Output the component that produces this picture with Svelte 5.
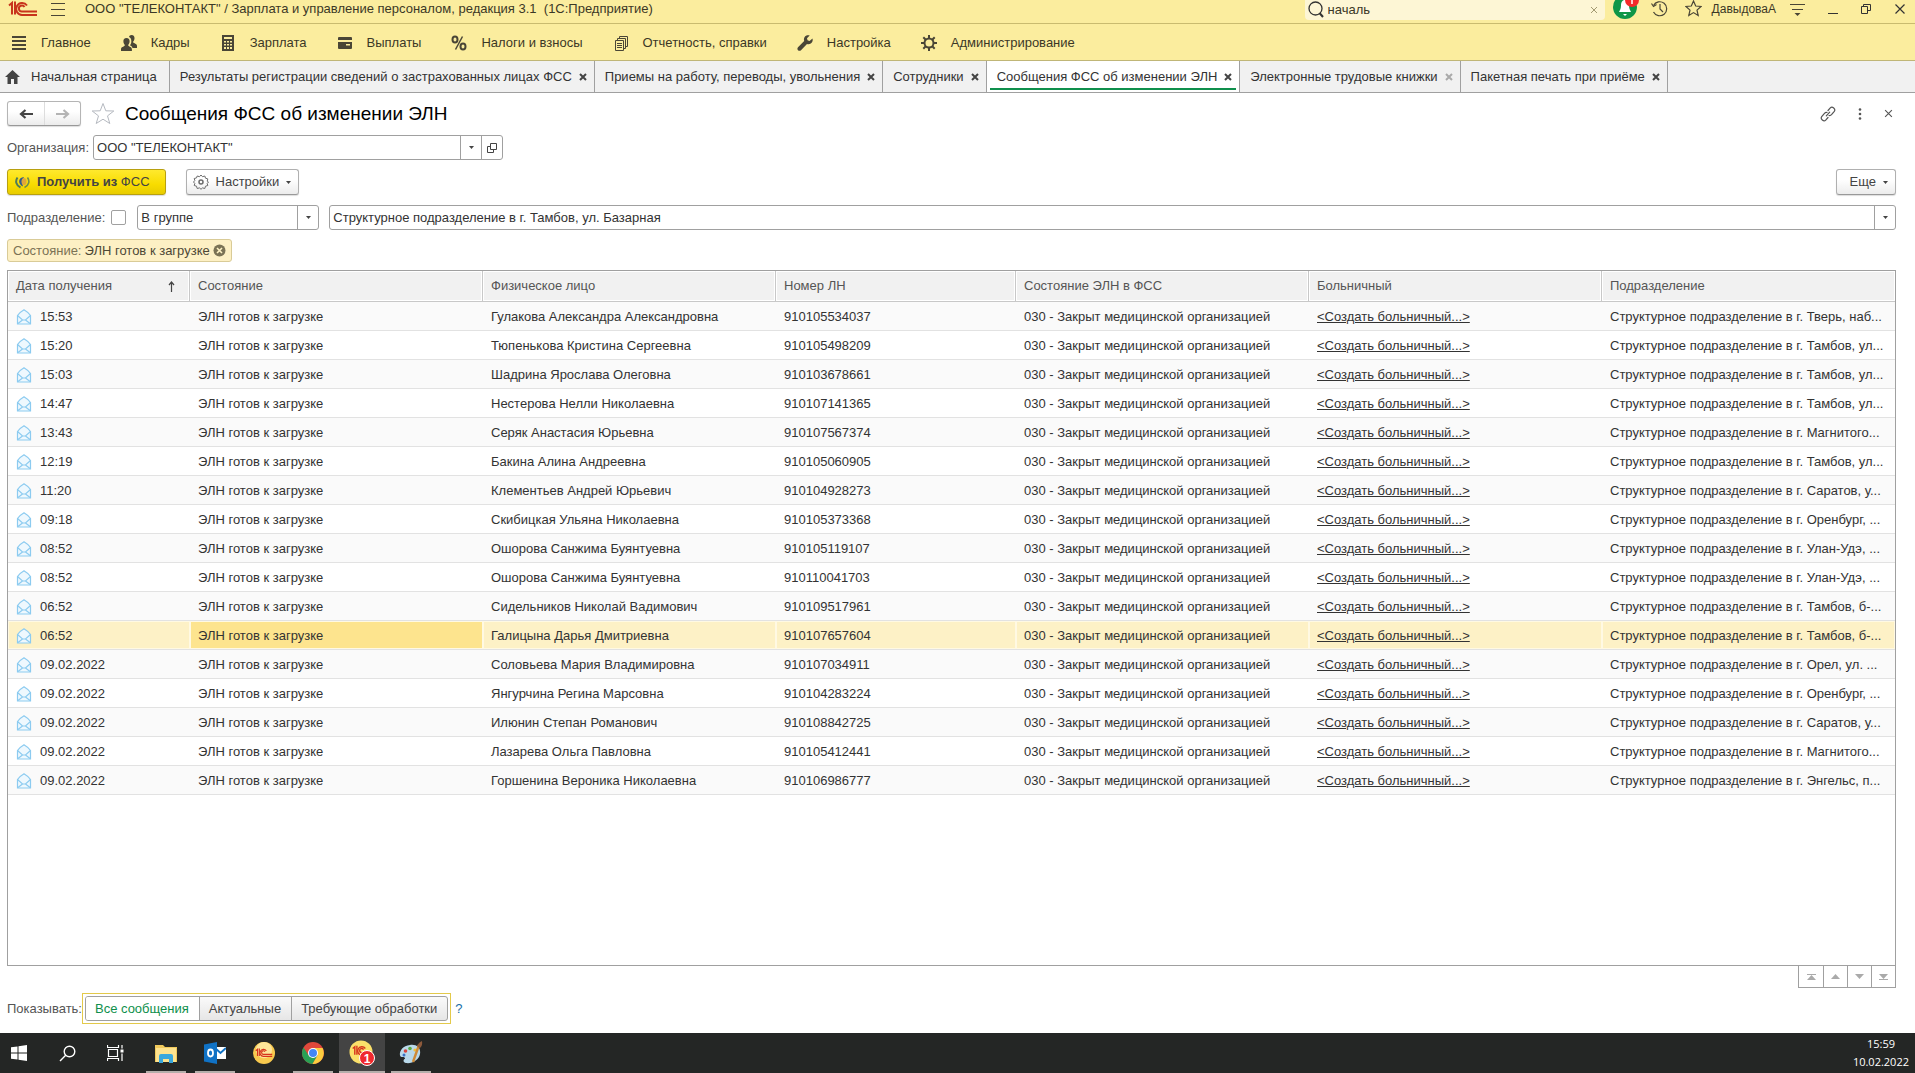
<script lang="ts">
  type Tab = { title: string; active?: boolean; dim?: boolean }
  type Row = { date: string; person: string; number: string; unit: string; current?: boolean }

  const sections = [
    { icon: 'main', title: 'Главное' },
    { icon: 'people', title: 'Кадры' },
    { icon: 'calc', title: 'Зарплата' },
    { icon: 'card', title: 'Выплаты' },
    { icon: 'percent', title: 'Налоги и взносы' },
    { icon: 'docs', title: 'Отчетность, справки' },
    { icon: 'wrench', title: 'Настройка' },
    { icon: 'gear', title: 'Администрирование' },
  ]

  const tabs: Tab[] = [
    { title: 'Результаты регистрации сведений о застрахованных лицах ФСС' },
    { title: 'Приемы на работу, переводы, увольнения' },
    { title: 'Сотрудники' },
    { title: 'Сообщения ФСС об изменении ЭЛН', active: true },
    { title: 'Электронные трудовые книжки', dim: true },
    { title: 'Пакетная печать при приёме' },
  ]

  const unit = 'Структурное подразделение в г. '

  const rows: Row[] = [
    { date: '15:53', person: 'Гулакова Александра Александровна', number: '910105534037', unit: 'Тверь, наб...' },
    { date: '15:20', person: 'Тюпенькова Кристина Сергеевна', number: '910105498209', unit: 'Тамбов, ул...' },
    { date: '15:03', person: 'Шадрина Ярослава Олеговна', number: '910103678661', unit: 'Тамбов, ул...' },
    { date: '14:47', person: 'Нестерова Нелли Николаевна', number: '910107141365', unit: 'Тамбов, ул...' },
    { date: '13:43', person: 'Серяк Анастасия Юрьевна', number: '910107567374', unit: 'Магнитого...' },
    { date: '12:19', person: 'Бакина Алина Андреевна', number: '910105060905', unit: 'Тамбов, ул...' },
    { date: '11:20', person: 'Клементьев Андрей Юрьевич', number: '910104928273', unit: 'Саратов, у...' },
    { date: '09:18', person: 'Скибицкая Ульяна Николаевна', number: '910105373368', unit: 'Оренбург, ...' },
    { date: '08:52', person: 'Ошорова Санжима Буянтуевна', number: '910105119107', unit: 'Улан-Удэ, ...' },
    { date: '08:52', person: 'Ошорова Санжима Буянтуевна', number: '910110041703', unit: 'Улан-Удэ, ...' },
    { date: '06:52', person: 'Сидельников Николай Вадимович', number: '910109517961', unit: 'Тамбов, б-...' },
    { date: '06:52', person: 'Галицына Дарья Дмитриевна', number: '910107657604', unit: 'Тамбов, б-...', current: true },
    { date: '09.02.2022', person: 'Соловьева Мария Владимировна', number: '910107034911', unit: 'Орел, ул. ...' },
    { date: '09.02.2022', person: 'Янгурчина Регина Марсовна', number: '910104283224', unit: 'Оренбург, ...' },
    { date: '09.02.2022', person: 'Илюнин Степан Романович', number: '910108842725', unit: 'Саратов, у...' },
    { date: '09.02.2022', person: 'Лазарева Ольга Павловна', number: '910105412441', unit: 'Магнитого...' },
    { date: '09.02.2022', person: 'Горшенина Вероника Николаевна', number: '910106986777', unit: 'Энгельс, п...' },
  ]

  const filters = ['Все сообщения', 'Актуальные', 'Требующие обработки']

  let search = $state('началь')
  let organization = $state('ООО "ТЕЛЕКОНТАКТ"')
  let unitFilter = $state('Структурное подразделение в г. Тамбов, ул. Базарная')
  let useUnit = $state(false)
  let shown = $state('Все сообщения')
</script>

{#snippet arrow()}
  <svg class="arrow" width="5" height="3" viewBox="0 0 5 3" aria-hidden="true"><path d="M0 0h5L2.500 3z" fill="#444" /></svg>
{/snippet}

{#snippet cross(size: number, color: string, weight: number)}
  <svg width={size} height={size} viewBox="0 0 8 8" aria-hidden="true">
    <path d="M1 1l6 6M7 1L1 7" stroke={color} stroke-width={weight} fill="none" />
  </svg>
{/snippet}

{#snippet sectionIcon(name: string)}
  <svg width="18" height="18" viewBox="0 0 18 18" fill="#4a4636" aria-hidden="true">
    {#if name === 'main'}
      <path d="M2 2h14v2H2zM2 6h14v2H2zM2 10h14v2H2zM2 14h14v2H2z" />
    {:else if name === 'people'}
      <path d="M11.500 1c2.200 0 3.200 1.600 3 3.600-.1 1.500-.8 2.500-1.300 3v1c.6.8 3.800 1.100 3.800 3.300V14h-4.500c-.3-1.500-1.500-2.200-2.500-2.700 1-1.200 1.500-3 1.300-4.600C11.200 4.700 10.300 3.600 9 3c.2-1.200 1.300-2 2.500-2z" />
      <path d="M6.500 4c2.200 0 3.200 1.500 3.100 3.500-.1 1.700-.8 2.700-1.300 3.200v1c.7.900 3.600 1.200 3.600 3.500V17H1v-1.800c0-2.300 3-2.600 3.700-3.500v-1c-.5-.5-1.200-1.500-1.300-3.200C3.300 5.500 4.300 4 6.500 4z" />
    {:else if name === 'calc'}
      <path fill-rule="evenodd" d="M3 1h12v16H3zM5 3v2h8V3zM5 7v1.500h2V7zM8 7v1.500h2V7zM11 7v1.500h2V7zM5 10v1.500h2V10zM8 10v1.500h2V10zM11 10v1.500h2V10zM5 13v2h2v-2zM8 13v2h2v-2zM11 13v2h2v-2z" />
    {:else if name === 'card'}
      <path fill-rule="evenodd" d="M3 3h12a1 1 0 0 1 1 1v2H2V4a1 1 0 0 1 1-1zM2 8h14v6a1 1 0 0 1-1 1H3a1 1 0 0 1-1-1zM10 10v1.500h4V10z" />
    {:else if name === 'percent'}
      <g fill="none" stroke="#4a4636" stroke-width="2">
        <ellipse cx="5" cy="5.500" rx="2.500" ry="3" /><ellipse cx="13" cy="12.500" rx="2.500" ry="3" /><path d="M12.500 2.500l-7 13" stroke-width="1.500" />
      </g>
    {:else if name === 'docs'}
      <g fill="none" stroke="#4a4636" stroke-width="1">
        <path d="M3.500 6.500h8v10h-8zM5.500 6V4.500h8v10H12M7.500 4V2.500h8v10H14M5 9.500h5M5 11.500h5M5 13.500h5" />
      </g>
    {:else if name === 'wrench'}
      <path d="M16.500 4.500l-3 2.500-2-.7-.5-2 2.700-2.700c-2-.6-4.200 0-5.200 1.700-.7 1.300-.7 2.500-.3 3.700L2 13.200c-.8.900-.8 2.200 0 3s2.200.8 3 0L11 10c1.200.4 2.600.3 3.800-.5 1.700-1.100 2.300-3.200 1.700-5z" />
    {:else}
      <circle cx="9" cy="9" r="4.500" fill="none" stroke="#4a4636" stroke-width="2" />
      <path d="M8 1h2v3H8zM8 14h2v3H8zM1 8h3v2H1zM14 8h3v2h-3zM2.600 4l1.400-1.400 2.200 2.200-1.400 1.400zM11.800 13.200l1.400-1.400 2.200 2.200-1.400 1.400zM2.600 14l2.200-2.200 1.400 1.400L4 15.400zM11.800 4.800L14 2.600 15.400 4l-2.200 2.200z" />
    {/if}
  </svg>
{/snippet}

{#snippet logo(color: string)}
  <g fill="none" stroke={color} stroke-width="2">
    <path d="M1 5l3-2.500V14" /><path d="M7 1v13" />
    <path d="M19 5a6 6 0 1 0-5 9.500h15" /><path d="M16.500 6.500a3 3 0 1 0-2.500 4.500h15" />
  </g>
{/snippet}

<div class="window">
  <header class="titlebar">
    <svg class="logo" width="30" height="17" viewBox="0 0 30 16" role="img" aria-label="1С">{@render logo('#c8341c')}</svg>
    <button class="burger" aria-label="Меню">
      <svg width="14" height="14" viewBox="0 0 14 14"><path d="M0 1.500h14M0 7.500h14M0 13.500h14" stroke="#4a4636" /></svg>
    </button>
    <span>ООО "ТЕЛЕКОНТАКТ" / Зарплата и управление персоналом, редакция 3.1&nbsp; (1С:Предприятие)</span>
    <label class="search">
      <svg width="16" height="18" viewBox="0 0 16 18" fill="none" stroke="#333"><circle cx="7.500" cy="7.500" r="6.500" stroke-width="1.300" /><path d="M11.500 12l3.500 4" stroke-width="2" /></svg>
      <input type="text" aria-label="Поиск" bind:value={search} />
      <button aria-label="Очистить">{@render cross(8, '#a39a72', 1)}</button>
    </label>
    <button class="bell" aria-label="Уведомления">
      <svg width="27" height="20" viewBox="0 0 27 20">
        <circle cx="12" cy="8" r="12" fill="#0f9647" />
        <path d="M12 1c-3 0-4 2.500-4 5.500 0 3-1 4.500-2 6.500h12c-1-2-2-3.500-2-6.500C16 3.500 15 1 12 1z" fill="#fff" /><path d="M10 15h4l-2 2z" fill="#fff" />
        <circle cx="19" cy="1" r="7" fill="#f52a2a" /><path d="M19 0v5" stroke="#fff" stroke-width="1.500" />
      </svg>
    </button>
    <button aria-label="История">
      <svg width="17" height="17" viewBox="0 0 17 17" fill="none" stroke="#4a4636" stroke-width="1.200"><path d="M2.500 5.500a7 7 0 1 1 0 6.500" /><path d="M0.500 3.500l2 3 3-2M9 4v5l3 3" /></svg>
    </button>
    <button aria-label="Избранное">
      <svg width="17" height="17" viewBox="0 0 17 17" fill="none" stroke="#4a4636" stroke-width="1.200"><path d="M8.500 1l2.200 5 5.300.5-4 3.600 1.200 5.400-4.700-2.900-4.700 2.900L5 10.100 1 6.500 6.300 6z" /></svg>
    </button>
    <a class="user" href="#user">ДавыдоваА</a>
    <button class="win" aria-label="Настройки окна">
      <svg width="15" height="16" viewBox="0 0 15 16"><path d="M0 3.500h15M2 8.500h11" stroke="#4a4636" /><path d="M4.500 12h6l-3 3z" fill="#4a4636" /></svg>
    </button>
    <button class="win" aria-label="Свернуть"><svg width="10" height="10" viewBox="0 0 10 10"><path d="M0 9.500h10" stroke="#333" /></svg></button>
    <button class="win" aria-label="Восстановить"><svg width="10" height="10" viewBox="0 0 10 10" fill="none" stroke="#333"><path d="M0.500 2.500h6v7h-6zM2.500 2V0.500h7v6H7" /></svg></button>
    <button class="win" aria-label="Закрыть">{@render cross(12, '#333', 0.8)}</button>
  </header>

  <nav class="sections">
    {#each sections as section}
      <a href="#{section.icon}">{@render sectionIcon(section.icon)}{section.title}</a>
    {/each}
  </nav>

  <nav class="tabs">
    <a class="tab home" href="#home">
      <svg width="15" height="14" viewBox="0 0 15 14"><path d="M7.500 0L15 7h-2.500v7H9V9H6v5H2.500V7H0z" fill="#444" /></svg>
      Начальная страница
    </a>
    {#each tabs as tab}
      <div class="tab" class:active={tab.active}>
        <a href="#tab">{tab.title}</a>
        <button aria-label="Закрыть вкладку">{@render cross(8, tab.dim ? '#aaa' : '#444', 2)}</button>
      </div>
    {/each}
  </nav>

  <main>
    <div class="heading">
      <div class="history">
        <button aria-label="Назад"><svg width="14" height="10" viewBox="0 0 14 10"><path d="M14 5H3M6.500 1L2 5l4.500 4" stroke="#444" stroke-width="2.200" fill="none" /></svg></button>
        <button aria-label="Вперед"><svg width="14" height="10" viewBox="0 0 14 10"><path d="M0 5h11M7.500 1L12 5l-4.500 4" stroke="#b4b4b4" stroke-width="2.200" fill="none" /></svg></button>
      </div>
      <button aria-label="В избранное">
        <svg width="24" height="23" viewBox="0 0 24 23" fill="none" stroke="#b5b9c0"><path d="M12 1.500l2.800 7.300 8 .2-6.300 4.900 2.300 7.600L12 17.200l-6.800 4.300 2.300-7.600L1.200 9l8-.2z" /></svg>
      </button>
      <h1>Сообщения ФСС об изменении ЭЛН</h1>
      <div class="form-tools">
        <button aria-label="Ссылка">
          <svg width="16" height="16" viewBox="0 0 16 16" fill="none" stroke="#555" stroke-width="1.200" stroke-linecap="round">
            <path d="M8 4.500l2.300-2.700c2-2 5.700 1.200 4 3.500L11.500 8.700c-.7.8-1.600 1-2.500.8" /><path d="M8 11.500l-2.300 2.700c-2 2-5.700-1.200-4-3.500l2.800-3.400c.7-.8 1.600-1 2.500-.8" /><path d="M6.300 9.800l3.400-3.700" />
          </svg>
        </button>
        <button aria-label="Еще"><svg width="4" height="12" viewBox="0 0 4 12" fill="#555"><circle cx="2" cy="1.500" r="1.300" /><circle cx="2" cy="6" r="1.300" /><circle cx="2" cy="10.500" r="1.300" /></svg></button>
        <button aria-label="Закрыть">{@render cross(9, '#555', 1)}</button>
      </div>
    </div>

    <div class="line">
      <label for="organization">Организация:</label>
      <div class="field organization">
        <input id="organization" type="text" bind:value={organization} />
        <button aria-label="Выбрать">{@render arrow()}</button>
        <button aria-label="Открыть"><svg width="10" height="10" viewBox="0 0 10 10" fill="none" stroke="#444"><path d="M3.500 0.500h6v6h-6zM3 3.500H0.500v6h6V7" /></svg></button>
      </div>
    </div>

    <div class="line commands">
      <button class="command primary">
        <svg width="15" height="13" viewBox="0 0 15 13" fill="none">
          <path d="M2.500 1.500C0 5 1 9.500 5.500 11.500" stroke="#4f7a5a" stroke-width="2" /><path d="M12.500 1.500c2.500 3.500 1.500 8-3 10" stroke="#6f8d4d" stroke-width="1.600" />
          <path d="M9 1C3 1.500 2.500 8 8 10.500c-1-3-1-6.500 1-9.500z" fill="#2f5d8c" /><ellipse cx="9" cy="5.500" rx="2.500" ry="3.500" fill="#e0a63a" />
        </svg>
        <span>Получить из <span class="thin">ФСС</span></span>
      </button>
      <button class="command">
        <svg width="16" height="16" viewBox="0 0 16 16" fill="none" stroke="#6b6b6b"><path d="M8 1l1.500 1.700L11.800 2l.7 2.200 2.300.7-.6 2.300L15.500 8l-1.300 1.500.6 2-2.300.7-.7 2.300-2.300-.6L8 15.300l-1.500-1.400-2.300.6-.7-2.300-2.300-.7.6-2L.5 8l1.300-1.500-.6-2 2.300-.6L4.200 2l2.300.7z" /><circle cx="8" cy="8" r="2" stroke-width="1.500" /></svg>
        Настройки
        {@render arrow()}
      </button>
      <button class="command more">Еще {@render arrow()}</button>
    </div>

    <div class="line">
      <label for="use-unit">Подразделение:</label>
      <input id="use-unit" class="check" type="checkbox" bind:checked={useUnit} />
      <div class="field comparison">
        <select aria-label="Вид сравнения"><option>В группе</option></select>
        <span class="drop">{@render arrow()}</span>
      </div>
      <div class="field unit">
        <input type="text" aria-label="Подразделение" bind:value={unitFilter} />
        <button aria-label="Выбрать">{@render arrow()}</button>
      </div>
    </div>

    <div class="chip">
      <span>Состояние:</span> ЭЛН готов к загрузке
      <button aria-label="Убрать отбор">
        <svg width="13" height="13" viewBox="0 0 13 13"><circle cx="6.500" cy="6.500" r="6" fill="#7b7355" /><path d="M4 4l5 5M9 4L4 9" stroke="#fff3c4" stroke-width="1.600" /></svg>
      </button>
    </div>

    <div class="list">
      <table>
        <colgroup>
          <col class="w-date" /><col class="w-text" /><col class="w-text" /><col class="w-number" /><col class="w-text" /><col class="w-text" /><col class="w-text" />
        </colgroup>
        <thead>
          <tr>
            <th>
              <div class="sorted">
                Дата получения
                <svg width="7" height="11" viewBox="0 0 7 11" aria-hidden="true"><path d="M3.500 11V1.500M1 4l2.500-3L6 4" fill="none" stroke="#444" stroke-width="1.200" /></svg>
              </div>
            </th>
            <th>Состояние</th>
            <th>Физическое лицо</th>
            <th>Номер ЛН</th>
            <th>Состояние ЭЛН в ФСС</th>
            <th>Больничный</th>
            <th>Подразделение</th>
          </tr>
        </thead>
        <tbody>
          {#each rows as row}
            <tr class:current={row.current}>
              <td>
                <div class="date">
                  <svg width="16" height="16" viewBox="0 0 16 16" fill="none" stroke="#8ccbf0" stroke-width="1.200">
                    <path d="M1.500 6.500C3 3.500 6 2 8 0.800c2 1.200 5 2.700 6.500 5.700v8.500h-13z" fill="#eef8fe" /><path d="M1.500 6.500L6.500 11h3l5-4.500M2 14.500L6.500 11M14 14.500L9.500 11" />
                  </svg>
                  {row.date}
                </div>
              </td>
              <td class="state">ЭЛН готов к загрузке</td>
              <td>{row.person}</td>
              <td>{row.number}</td>
              <td>030 - Закрыт медицинской организацией</td>
              <td><a href="#create">&lt;Создать больничный...&gt;</a></td>
              <td>{unit}{row.unit}</td>
            </tr>
          {/each}
        </tbody>
      </table>
    </div>

    <div class="scroller">
      <button aria-label="В начало"><svg width="9" height="6" viewBox="0 0 9 6" fill="#aaa"><path d="M0 0h9v1H0zM4.500 1L9 6H0z" /></svg></button>
      <button aria-label="Вверх"><svg width="9" height="5" viewBox="0 0 9 5" fill="#aaa"><path d="M4.500 0L9 5H0z" /></svg></button>
      <button aria-label="Вниз"><svg width="9" height="5" viewBox="0 0 9 5" fill="#aaa"><path d="M0 0h9L4.500 5z" /></svg></button>
      <button aria-label="В конец"><svg width="9" height="6" viewBox="0 0 9 6" fill="#aaa"><path d="M0 0h9L4.500 5zM0 5h9v1H0z" /></svg></button>
    </div>

    <div class="line show">
      <span>Показывать:</span>
      <div class="focus">
        <div class="switch">
          {#each filters as filter}
            <button class:on={shown === filter} onclick={() => (shown = filter)}>{filter}</button>
          {/each}
        </div>
      </div>
      <a class="help" href="#help">?</a>
    </div>
  </main>

  <footer class="taskbar">
    <div class="system">
      <button aria-label="Пуск"><svg width="16" height="16" viewBox="0 0 16 16" fill="#fff"><path d="M0 2.300l6.500-.9v6.100H0zM7.500 1.200L16 0v7.500H7.500zM0 8.500h6.500v6.100L0 13.700zM7.500 8.500H16V16l-8.500-1.200z" /></svg></button>
      <button aria-label="Поиск"><svg width="17" height="17" viewBox="0 0 17 17" fill="none" stroke="#fff" stroke-width="1.400"><circle cx="10.500" cy="6.500" r="5.300" /><path d="M6.700 10.300L1 16" /></svg></button>
      <button aria-label="Представление задач"><svg width="17" height="16" viewBox="0 0 17 16" fill="none" stroke="#fff" stroke-width="1.200"><path d="M1.500 4.500h9v7h-9zM0.500 0v2.500h11V0M0.500 16v-2.500h11V16M15 0v3.500M15 8.500V16" /><path d="M13.500 4.500h3v3h-3z" fill="#fff" stroke="none" /></svg></button>
    </div>
    <button class="open" aria-label="Проводник">
      <svg width="22" height="19" viewBox="0 0 22 19"><path d="M0 1h8l2 2h12v15H0z" fill="#f0c95c" /><path d="M1 4h20v14H1z" fill="#fde28e" /><path d="M4 19v-7a2 2 0 0 1 2-2h10a2 2 0 0 1 2 2v7h-4v-4H8v4z" fill="#3aa7dc" /></svg>
    </button>
    <button class="open" aria-label="Outlook">
      <svg width="22" height="22" viewBox="0 0 22 22"><path d="M11 5h11v12H11z" fill="#fff" /><path d="M11 6l5.500 5L22 6" stroke="#1072c5" stroke-width="2" fill="none" /><path d="M0 2.500L13 0v22L0 19.500z" fill="#1072c5" /><ellipse cx="6.500" cy="11" rx="2.500" ry="3.500" fill="none" stroke="#fff" stroke-width="1.800" /></svg>
    </button>
    <button aria-label="1С">
      <svg width="22" height="22" viewBox="0 0 30 30"><circle cx="15" cy="15" r="15" fill="#f8c94e" /><circle cx="15" cy="11" r="11" fill="#fde59a" /><g transform="translate(3 8) scale(0.8)">{@render logo('#d6331c')}</g></svg>
    </button>
    <button class="open" aria-label="Chrome">
      <svg width="22" height="22" viewBox="0 0 22 22"><circle cx="11" cy="11" r="11" fill="#e0483b" /><path d="M1.500 5.500A11 11 0 0 0 10.500 22L15.500 13.500 11 11l-4.300 2.500z" fill="#29a055" /><path d="M20.600 6H11l4.500 7.500L10.500 22A11 11 0 0 0 20.600 6z" fill="#fccd3f" /><circle cx="11" cy="11" r="5" fill="#fff" /><circle cx="11" cy="11" r="4" fill="#4286f4" /></svg>
    </button>
    <button class="open focused" aria-label="1С:Предприятие">
      <svg width="26" height="26" viewBox="0 0 26 26"><circle cx="12" cy="12" r="11.500" fill="#fbe06a" /><g transform="translate(3 5) scale(0.700)">{@render logo('#d6331c')}</g><circle cx="18" cy="18" r="7.500" fill="#f0282e" stroke="#fff" /></svg>
      <span class="count">1</span>
    </button>
    <button class="open" aria-label="Paint">
      <svg width="24" height="24" viewBox="0 0 24 24"><path d="M11 4c7-1 11 3 10 9s-8 10-14 9c-3-.5-3-3-1.500-4S5 15.500 3 16c-4 .5-3-11 8-12z" fill="#b9d9ea" /><circle cx="6.500" cy="10" r="1.800" fill="#d8443c" /><circle cx="11" cy="7.500" r="1.800" fill="#58a944" /><circle cx="5" cy="14" r="1.500" fill="#3c72c4" /><circle cx="16" cy="9" r="1.600" fill="#eec23b" /><path d="M20 4l-6 17" stroke="#cf8a35" stroke-width="2.400" /><path d="M18.500 6c0-3 2-5 4.500-6 .5 3 0 5-2 7z" fill="#8d5a3b" /></svg>
    </button>
    <div class="clock"><time>15:59</time><time>10.02.2022</time></div>
  </footer>
</div>

<style>
  :global(body) {
    font-family: "Liberation Sans", Arial, sans-serif;
    font-size: 13px;
    color: #333;
    background: #fff;
  }

  .window {
    --yellow: #fbed9e;
    --edge: #a0a0a0;
    --green: #0f8f4c;
    display: flex;
    flex-direction: column;
    min-height: 100vh;
    line-height: 16px;
    white-space: nowrap;
  }

  .window * {
    box-sizing: border-box;
  }

  svg {
    display: block;
    flex: none;
  }

  a {
    color: inherit;
    text-decoration: none;
  }

  button,
  input,
  select {
    font: inherit;
    color: inherit;
  }

  button {
    display: flex;
    align-items: center;
    justify-content: center;
    padding: 0;
    border: 0;
    background: none;
    cursor: pointer;
  }

  .titlebar {
    display: flex;
    align-items: center;
    height: 24px;
    padding: 0 9px 6px 8px;
    border-bottom: 1px solid #c9bb6f;
    background: var(--yellow);
    color: #3b3826;
  }

  .titlebar > button {
    margin-right: 17px;
  }

  .titlebar > .burger {
    margin: 0 20px 0 13px;
  }

  .search {
    display: flex;
    align-items: center;
    width: 300px;
    height: 20px;
    margin-top: 2px;
    margin-left: auto;
    padding: 0 7px 0 3px;
    gap: 4px;
    border-radius: 0 0 4px 4px;
    background: #fdf6d5;
  }

  .search input {
    flex: 1;
    min-width: 0;
    padding: 0;
    border: 0;
    outline: 0;
    background: none;
  }

  .titlebar > .bell {
    margin: 0 11px 0 8px;
  }

  .user {
    margin: 0 -9px 0 -7px;
    font-size: 12px;
  }

  .titlebar > .win {
    margin: 0 0 0 23px;
  }

  .sections {
    display: flex;
    align-items: center;
    gap: 29px;
    height: 37px;
    padding: 1px 0 0 10px;
    border-bottom: 1px solid #c0b677;
    background: var(--yellow);
    color: #3b3826;
  }

  .sections a {
    display: flex;
    align-items: center;
    gap: 13px;
  }

  .tabs {
    display: flex;
    height: 32px;
    border-bottom: 1px solid var(--edge);
    background: #f1f1f1;
  }

  .tab {
    display: flex;
    align-items: center;
    gap: 7px;
    padding: 0 7px 0 10px;
    border-right: 1px solid var(--edge);
  }

  .home {
    gap: 11px;
    padding: 0 12px 0 5px;
  }

  .active {
    background: linear-gradient(var(--green), var(--green)) center bottom 2px / calc(100% - 6px) 2px no-repeat #fff;
  }

  main {
    display: flex;
    flex: 1;
    flex-direction: column;
    padding: 8px 19px 9px 7px;
  }

  .heading {
    display: flex;
    align-items: center;
    height: 25px;
    gap: 10px;
    margin-bottom: 9px;
  }

  .history {
    display: flex;
    border: 1px solid #b5b5b5;
    border-bottom-color: #999;
    border-radius: 3px;
    background: linear-gradient(#fff 40%, #ececec);
    box-shadow: 0 1px 1px #ddd;
  }

  .history button {
    width: 36px;
    height: 23px;
  }

  .history button + button {
    border-left: 1px solid #ddd;
  }

  h1 {
    margin: 0;
    font-size: 19px;
    font-weight: 400;
    line-height: 24px;
    color: #000;
  }

  .form-tools {
    display: flex;
    align-items: center;
    gap: 22px;
    margin-left: auto;
    padding-right: 3px;
  }

  .line {
    display: flex;
    align-items: center;
    min-height: 25px;
    margin-bottom: 9px;
  }

  .line.commands {
    margin-bottom: 10px;
  }

  .line label,
  .show > span {
    color: #555;
  }

  .field {
    display: flex;
    height: 25px;
    border: 1px solid var(--edge);
    border-radius: 3px;
    background: #fff;
  }

  .field input,
  .field select {
    flex: 1;
    min-width: 0;
    padding: 0 3px;
    border: 0;
    outline: 0;
    background: none;
    appearance: none;
  }

  .field button,
  .drop {
    width: 21px;
    border-left: 1px solid var(--edge);
  }

  .drop {
    display: flex;
    align-items: center;
    justify-content: center;
    pointer-events: none;
  }

  .organization {
    width: 410px;
    margin-left: 4px;
  }

  .comparison {
    width: 182px;
    margin: 0 10px 0 11px;
  }

  .unit {
    flex: 1;
  }

  .check {
    width: 15px;
    height: 15px;
    margin: 0 0 0 6px;
    border: 1px solid var(--edge);
    border-radius: 2px;
    appearance: none;
  }

  .check:checked {
    background: var(--green);
  }

  .command {
    height: 26px;
    gap: 7px;
    padding: 0 7px 0 6px;
    border: 1px solid #b0b0b0;
    border-bottom-color: #999;
    border-radius: 3px;
    background: linear-gradient(#fff 40%, #ececec);
    box-shadow: 0 1px 1px #ddd;
    color: #444;
  }

  .primary {
    margin-right: 20px;
    padding: 0 15px 0 7px;
    border-color: #b8a010;
    background: linear-gradient(#ffe92e, #f8dc00 60%, #e8cc00);
    font-weight: 700;
  }

  .thin {
    font-weight: 400;
  }

  .more {
    margin-left: auto;
    padding-left: 13px;
  }

  .chip {
    display: flex;
    align-items: center;
    align-self: flex-start;
    height: 23px;
    gap: 3px;
    margin-bottom: 8px;
    padding: 0 5px;
    border: 1px solid #d9cb97;
    border-radius: 3px;
    background: #fdf0c4;
    color: #4d4836;
  }

  .chip span {
    color: #7b7355;
  }

  .list {
    flex: 1;
    border: 1px solid var(--edge);
  }

  table {
    width: 100%;
    border-collapse: separate;
    border-spacing: 0;
    table-layout: fixed;
  }

  .w-date {
    width: 182px;
  }

  .w-text {
    width: 293px;
  }

  .w-number {
    width: 240px;
  }

  th {
    height: 31px;
    padding: 0 8px;
    border-right: 1px solid #c8c8c8;
    border-bottom: 1px solid #c8c8c8;
    background: #f1f1f1;
    box-shadow: inset 0 0 0 1px #fff;
    color: #555;
    font-weight: 400;
    text-align: left;
  }

  th:last-child {
    border-right: 0;
  }

  .sorted {
    display: flex;
    align-items: center;
    justify-content: space-between;
    padding-right: 6px;
  }

  td {
    height: 29px;
    padding: 1px 8px 0;
    overflow: hidden;
    border-bottom: 1px solid #e2e2e2;
  }

  tbody tr:nth-child(odd) {
    background: #fafafa;
  }

  td a {
    text-decoration: underline;
  }

  .date {
    display: flex;
    align-items: center;
    gap: 8px;
  }

  .current td {
    background: #fdf1c6;
    box-shadow: inset 0 0 0 1px #fff9e3;
  }

  .current .state {
    background: #fde48e;
  }

  .scroller {
    display: flex;
    align-self: flex-end;
    margin-top: -1px;
    margin-bottom: 5px;
    border: 1px solid var(--edge);
  }

  .scroller button {
    width: 24px;
    height: 21px;
  }

  .scroller button + button {
    border-left: 1px solid var(--edge);
  }

  .line.show {
    margin-bottom: 0;
  }

  .focus {
    padding: 2px;
    border: 1px solid #e3c94a;
  }

  .switch {
    display: flex;
    overflow: hidden;
    border: 1px solid var(--edge);
    border-radius: 3px;
    background: linear-gradient(#fafafa, #e6e6e6);
  }

  .switch button {
    height: 23px;
    padding: 0 10px 0 9px;
    color: #444;
  }

  .switch button + button {
    border-left: 1px solid var(--edge);
  }

  .switch .on {
    background: #fff;
    color: var(--green);
  }

  .help {
    margin-left: 4px;
    color: #1a6fa8;
  }

  .taskbar {
    display: flex;
    height: 40px;
    background: #242625;
    color: #fff;
  }

  .system {
    display: flex;
    padding-right: 2px;
  }

  .taskbar button {
    position: relative;
    width: 40px;
    margin-right: 9px;
  }

  .taskbar .system button {
    width: 38px;
    margin-right: 10px;
  }

  .taskbar .open {
    border-bottom: 2px solid #b5aeab;
    padding-top: 2px;
  }

  .taskbar .focused {
    width: 46px;
    margin: 0 6px 0 -3px;
    background: #444;
  }

  .count {
    position: absolute;
    top: 18px;
    left: 21px;
    width: 14px;
    font-size: 12px;
    font-weight: 700;
    text-align: center;
  }

  .clock {
    display: flex;
    flex-direction: column;
    align-items: center;
    margin-left: auto;
    padding: 2px 6px 0 0;
    font-family: "Open Sans", "Noto Sans", sans-serif;
    font-size: 11px;
    line-height: 18px;
  }
</style>
